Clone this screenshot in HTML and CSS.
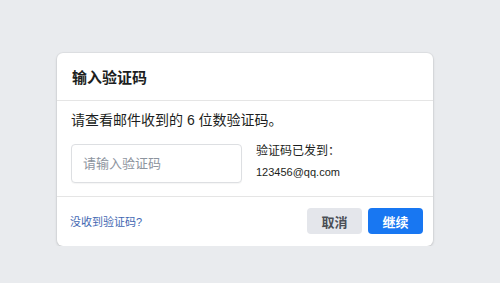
FILE: index.html
```html
<!DOCTYPE html>
<html lang="zh-CN">
<head>
<meta charset="utf-8">
<title>输入验证码</title>
<link rel="stylesheet" href="styles.css">
</head>
<body>
<div class="dialog">
  <div class="header"><h2 class="title">输入验证码</h2></div>
  <div class="content">
    <p class="desc">请查看邮件收到的 6 位数验证码。</p>
    <div class="row">
      <input class="code" type="text" placeholder="请输入验证码">
      <div class="info">
        <div class="sent">验证码已发到：</div>
        <div class="email">123456@qq.com</div>
      </div>
    </div>
  </div>
  <div class="footer">
    <a class="link" href="#">没收到验证码?</a>
    <div class="actions">
      <button class="btn btn-cancel">取消</button>
      <button class="btn btn-primary">继续</button>
    </div>
  </div>
</div>
</body>
</html>
```
FILE: styles.css
```css
html, body {
  margin: 0;
  padding: 0;
  background: #e9ebee;
  font-family: "Liberation Sans", "Noto Sans CJK SC", sans-serif;
  color: #1c1e21;
}
body {
  padding: 53px 0 0 57px;
}
.dialog {
  width: 376px;
  background: #fff;
  border-radius: 6px;
  box-shadow: 0 1px 3px rgba(0, 0, 0, 0.15), 0 0 0 1px rgba(0, 0, 0, 0.03);
  overflow: hidden;
}
.header {
  height: 47px;
  padding: 0 15px;
  display: flex;
  align-items: center;
  border-bottom: 1px solid #e5e5e5;
}
.title {
  margin: 0;
  font-size: 15px;
  font-weight: bold;
  color: #1c1e21;
}
.content {
  padding: 10px 14px 13px;
  border-bottom: 1px solid #e5e5e5;
}
.desc {
  margin: 0;
  font-size: 14px;
  line-height: 18px;
  color: #1c1e21;
}
.row {
  display: flex;
  margin-top: 15px;
  align-items: flex-start;
}
.code {
  box-sizing: border-box;
  width: 171px;
  height: 39px;
  border: 1px solid #dddfe2;
  border-radius: 4px;
  padding: 0 11px;
  font-family: inherit;
  font-size: 13px;
  outline: none;
  box-shadow: 0 1px 1px rgba(0, 0, 0, 0.04);
}
.code::placeholder {
  color: #8d949e;
}
.info {
  margin-left: 14px;
}
.sent {
  font-size: 12px;
  line-height: 16px;
  margin-top: -1px;
  color: #1c1e21;
}
.email {
  font-size: 11px;
  line-height: 14px;
  margin-top: 6px;
  color: #1c1e21;
}
.footer {
  display: flex;
  align-items: center;
  justify-content: space-between;
  padding: 11px 10px 12px 13px;
}
.link {
  font-size: 11px;
  color: #4267b2;
  text-decoration: none;
}
.actions {
  display: flex;
  gap: 6px;
}
.btn {
  height: 26px;
  width: 55px;
  border: none;
  border-radius: 4px;
  font-family: inherit;
  font-size: 13px;
  font-weight: bold;
  padding: 0;
  cursor: pointer;
}
.btn-cancel {
  background: #e4e6eb;
  color: #4b4f56;
}
.btn-primary {
  background: #1877f2;
  color: #fff;
}
```
